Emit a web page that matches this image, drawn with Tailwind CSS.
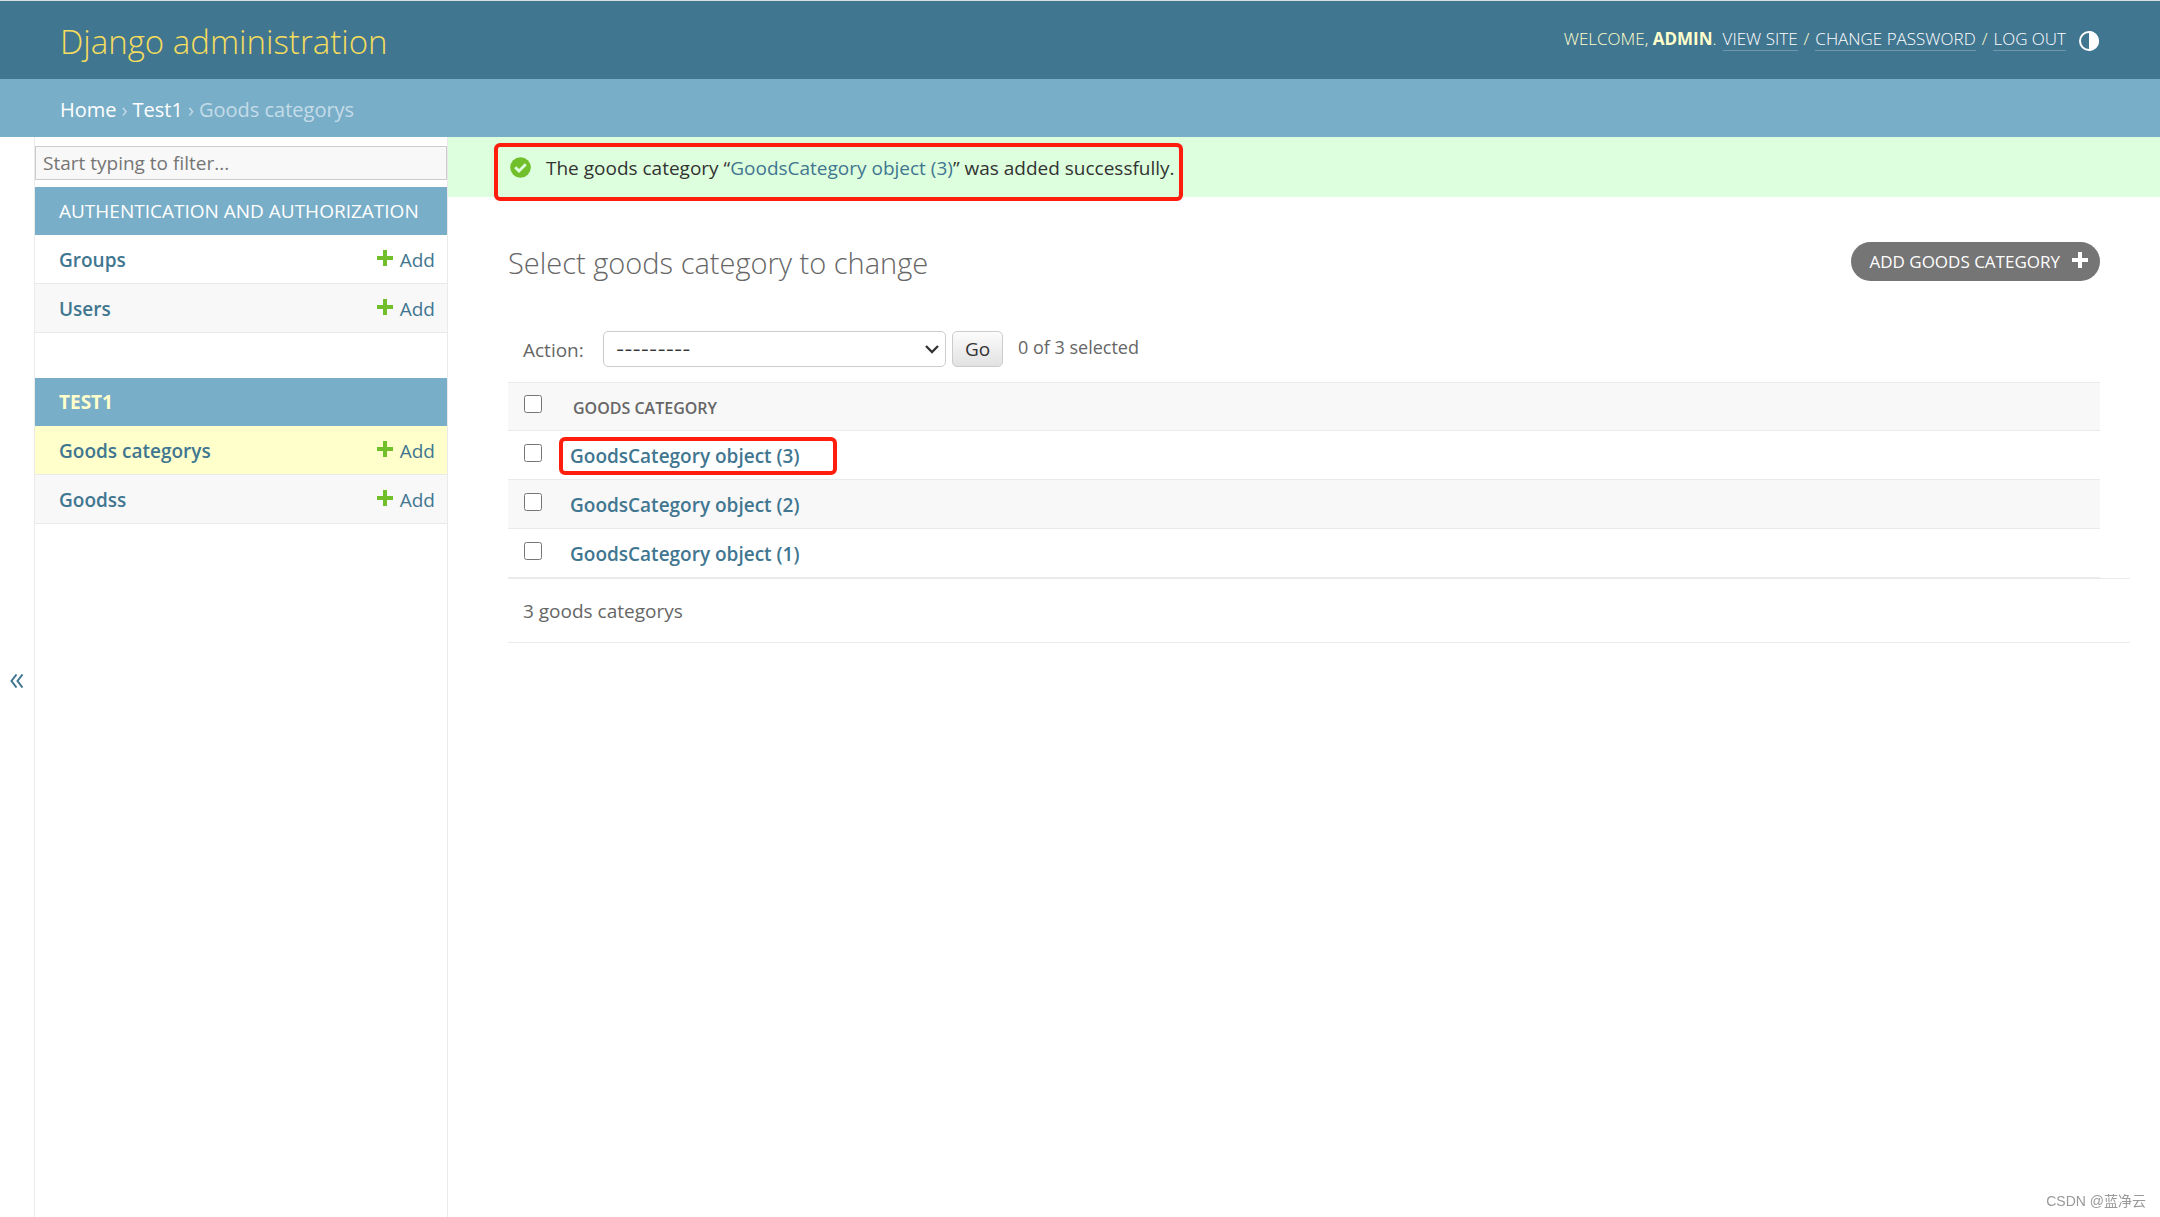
<!DOCTYPE html>
<html lang="en">
<head>
  <meta charset="UTF-8" />
  <meta name="viewport" content="width=device-width, initial-scale=1.0" />
  <title>Select goods category to change | Django site admin</title>

  <!-- Include Tailwind CSS -->
  <script src="https://cdn.jsdelivr.net/npm/@tailwindcss/browser@4"></script>
</head>
<body class="min-h-screen flex flex-col bg-white text-[#333] text-[19px] leading-6 font-['Open_Sans','Noto_Sans_CJK_SC',sans-serif]">

  <!-- Header -->
  <header class="h-[79px] border-t border-[#d8dfe0] bg-[#417690] text-[#ffc] flex justify-between items-center px-[60px]">
    <h1 class="text-[33px] leading-10 font-light pt-1"><a href="#" class="text-[#f5dd5d]">Django administration</a></h1>
    <div class="flex items-center gap-3">
      <div class="text-[17px] leading-[22px] font-light uppercase flex gap-[6px] pb-0.5">
        <span>Welcome, <strong class="font-bold">admin</strong>.</span>
        <a href="#" class="text-white border-b border-white/25">View site</a>
        <span>/</span>
        <a href="#" class="text-white border-b border-white/25">Change password</a>
        <span>/</span>
        <button type="button" class="text-white uppercase border-b border-white/25">Log out</button>
      </div>
      <button type="button" aria-label="Toggle theme" class="text-white pt-0.5">
        <svg class="w-[22px] h-[22px]" viewBox="0 0 22 22" fill="none">
          <circle cx="11" cy="11" r="9" stroke="currentColor" stroke-width="2" />
          <path d="M11 1a10 10 0 0 1 0 20z" fill="currentColor" />
        </svg>
      </button>
    </div>
  </header>

  <!-- Breadcrumbs -->
  <nav aria-label="Breadcrumbs" class="h-[58px] bg-[#79aec8] text-[#c4dce8] flex items-center gap-[5px] px-[60px] pt-1 text-[20px]">
    <a href="#" class="text-white font-medium">Home</a>
    <span>›</span>
    <a href="#" class="text-white font-medium">Test1</a>
    <span>›</span>
    <span>Goods categorys</span>
  </nav>

  <div class="flex flex-1">
    <button type="button" aria-label="Toggle navigation" class="w-[34px] shrink-0 text-[#417690] flex justify-center pt-[537px]">
      <svg class="w-[14px] h-[14px]" viewBox="0 0 14 14" fill="none" stroke="currentColor" stroke-width="2">
        <path d="M6.500.5L1.500 7l5 6.500M12.500.5L7.500 7l5 6.500" />
      </svg>
    </button>

    <!-- Sidebar -->
    <nav aria-label="Sidebar" class="w-[414px] shrink-0 border-x border-[#eaeaea] pt-[9px]">
      <input type="search" aria-label="Filter navigation items" placeholder="Start typing to filter..." class="block w-full h-[34px] mb-[7px] px-[7px] border border-[#ccc] bg-[#f8f8f8] placeholder:text-[#757575]" />

      <table class="w-full mb-[45px] text-[#417690]">
        <caption class="h-12 bg-[#79aec8] text-left px-6 py-3 uppercase"><a href="#" class="text-white">Authentication and Authorization</a></caption>
        <tbody>
          <tr class="h-12 border-b border-[#eaeaea]">
            <th scope="row" class="text-left pl-6 pt-0.5 font-semibold"><a href="#">Groups</a></th>
            <td class="pr-3 pt-0.5">
              <a href="#" class="flex items-center justify-end gap-[7px]">
                <svg class="w-4 h-4 mb-1" viewBox="0 0 16 16" fill="#70bf2b"><path d="M6 0h4v6h6v4h-6v6H6v-6H0V6h6z" /></svg>
                <span>Add</span>
              </a>
            </td>
          </tr>
          <tr class="h-[49px] border-b border-[#eaeaea] bg-[#f8f8f8]">
            <th scope="row" class="text-left pl-6 pt-0.5 font-semibold"><a href="#">Users</a></th>
            <td class="pr-3 pt-0.5">
              <a href="#" class="flex items-center justify-end gap-[7px]">
                <svg class="w-4 h-4 mb-1" viewBox="0 0 16 16" fill="#70bf2b"><path d="M6 0h4v6h6v4h-6v6H6v-6H0V6h6z" /></svg>
                <span>Add</span>
              </a>
            </td>
          </tr>
        </tbody>
      </table>

      <table class="w-full text-[#417690]">
        <caption class="h-12 bg-[#79aec8] text-left px-6 py-3 uppercase"><a href="#" class="text-[#ffc] font-bold">Test1</a></caption>
        <tbody>
          <tr class="h-[49px] border-b border-[#eaeaea] bg-[#ffc]">
            <th scope="row" class="text-left pl-6 pt-0.5 font-semibold"><a href="#" aria-current="page">Goods categorys</a></th>
            <td class="pr-3 pt-0.5">
              <a href="#" class="flex items-center justify-end gap-[7px]">
                <svg class="w-4 h-4 mb-1" viewBox="0 0 16 16" fill="#70bf2b"><path d="M6 0h4v6h6v4h-6v6H6v-6H0V6h6z" /></svg>
                <span>Add</span>
              </a>
            </td>
          </tr>
          <tr class="h-[49px] border-b border-[#eaeaea] bg-[#f8f8f8]">
            <th scope="row" class="text-left pl-6 pt-0.5 font-semibold"><a href="#">Goodss</a></th>
            <td class="pr-3 pt-0.5">
              <a href="#" class="flex items-center justify-end gap-[7px]">
                <svg class="w-4 h-4 mb-1" viewBox="0 0 16 16" fill="#70bf2b"><path d="M6 0h4v6h6v4h-6v6H6v-6H0V6h6z" /></svg>
                <span>Add</span>
              </a>
            </td>
          </tr>
        </tbody>
      </table>
    </nav>

    <!-- Main Content -->
    <main class="flex-1 min-w-0">
      <div class="h-[60px] bg-[#dfd] flex pl-[62px] pt-5">
        <div class="relative flex items-start gap-[15px]">
          <svg class="w-[21px] h-[21px]" viewBox="0 0 21 21" fill="none">
            <circle cx="10.500" cy="10.500" r="10.300" fill="#70bf2b" />
            <path d="M5.200 10.200L9 14l6.800-6.800" stroke="#dfd" stroke-width="2.800" />
          </svg>
          <p class="whitespace-nowrap leading-[22px]">The goods category “<a href="#" class="text-[#417690]">GoodsCategory object (3)</a>” was added successfully.</p>
          <span class="absolute -left-4 -right-2 -top-[14px] h-[58px] border-4 border-[#ff1d0e] rounded-md pointer-events-none"></span>
        </div>
      </div>

      <div class="pl-[60px] pr-[30px] pt-[45px]">
        <div class="flex justify-between items-start pr-[30px]">
          <h2 class="text-[29px] leading-[42px] font-light text-[#666]">Select goods category to change</h2>
          <a href="#" class="h-[39px] flex items-center gap-3 rounded-full bg-[#757575] text-white text-[17px] uppercase pl-[18px] pr-3">
            <span>Add goods category</span>
            <svg class="w-4 h-4 mb-1" viewBox="0 0 16 16" fill="currentColor"><path d="M6 0h4v6h6v4h-6v6H6v-6H0V6h6z" /></svg>
          </a>
        </div>

        <form>
          <div class="flex items-center pl-[15px] mt-[47px] mb-[15px] text-[#666]">
            <label for="action" class="pt-0.5 w-20">Action:</label>
            <div class="relative w-[343px]">
              <select id="action" class="appearance-none w-full h-9 pl-3 pt-0.5 border border-[#ccc] rounded-[5px] bg-white text-[#333] text-[18px] font-['Inter',sans-serif]">
                <option>---------</option>
                <option>Delete selected goods categorys</option>
              </select>
              <svg class="absolute right-[7px] top-[14px] w-[14px] h-[9px] pointer-events-none" viewBox="0 0 14 9" fill="none" stroke="#333" stroke-width="2.300"><path d="M1 1l6 6 6-6" /></svg>
            </div>
            <button type="submit" class="ml-[6px] h-9 w-[51px] border border-[#ccc] rounded-[5px] text-[#333] bg-linear-to-b from-[#fcfcfc] to-[#e2e2e2]">Go</button>
            <span class="ml-[15px] pb-1 text-[18px]">0 of 3 selected</span>
          </div>

          <div class="pr-[30px]">
            <table class="w-full border-t border-[#eaeaea] text-left text-[#417690]">
              <thead>
                <tr class="h-[48px] border-b border-[#eaeaea] bg-[#f8f8f8] text-[#666]">
                  <th class="w-[62px] pl-4 pb-[6px]"><input type="checkbox" aria-label="Select all" class="block w-[18px] h-[18px]" /></th>
                  <th class="text-[16px] font-semibold uppercase pl-[3px] pt-0.5">Goods category</th>
                </tr>
              </thead>
              <tbody>
                <tr class="h-[49px] border-b border-[#eaeaea]">
                  <td class="pl-4 pb-1"><input type="checkbox" aria-label="Select GoodsCategory object (3)" class="block w-[18px] h-[18px]" /></td>
                  <th scope="row" class="font-semibold pt-0.5">
                    <span class="relative">
                      <a href="#">GoodsCategory object (3)</a>
                      <span class="absolute -left-[11px] -top-[6px] w-[278px] h-[38px] border-4 border-[#ff1d0e] rounded-md pointer-events-none"></span>
                    </span>
                  </th>
                </tr>
                <tr class="h-[49px] border-b border-[#eaeaea] bg-[#f8f8f8]">
                  <td class="pl-4 pb-1"><input type="checkbox" aria-label="Select GoodsCategory object (2)" class="block w-[18px] h-[18px]" /></td>
                  <th scope="row" class="font-semibold pt-0.5"><a href="#">GoodsCategory object (2)</a></th>
                </tr>
                <tr class="h-[49px] border-b border-[#eaeaea]">
                  <td class="pl-4 pb-1"><input type="checkbox" aria-label="Select GoodsCategory object (1)" class="block w-[18px] h-[18px]" /></td>
                  <th scope="row" class="font-semibold pt-0.5"><a href="#">GoodsCategory object (1)</a></th>
                </tr>
              </tbody>
            </table>
          </div>
          <p class="h-[65px] border-y border-[#eaeaea] flex items-center pl-[15px] text-[#666]">3 goods categorys</p>
        </form>
      </div>
    </main>
  </div>

  <span class="fixed right-[14px] bottom-[6px] text-[14px] leading-5 text-[#999] font-['Liberation_Sans','Noto_Sans_CJK_SC',sans-serif]">CSDN @蓝净云</span>
</body>
</html>
